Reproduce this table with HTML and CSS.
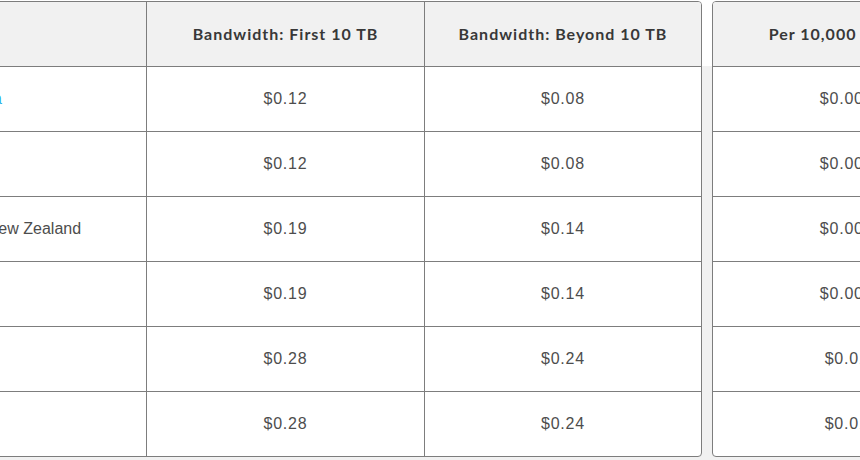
FILE: index.html
```html
<!DOCTYPE html>
<html lang="en">
<head>
<meta charset="utf-8">
<title>CDN pricing</title>
<link rel="stylesheet" href="styles.css">
</head>
<body>
<div class="tables">
  <div class="price-table main">
    <div class="cell head name"></div>
    <div class="cell head">Bandwidth: First 10 TB</div>
    <div class="cell head last">Bandwidth: Beyond 10 TB</div>

    <div class="cell name"><a href="#">Latin America</a></div>
    <div class="cell price">$0.12</div>
    <div class="cell price last">$0.08</div>

    <div class="cell name">Europe</div>
    <div class="cell price">$0.12</div>
    <div class="cell price last">$0.08</div>

    <div class="cell name">Australia &amp; New Zealand</div>
    <div class="cell price">$0.19</div>
    <div class="cell price last">$0.14</div>

    <div class="cell name">Asia Pacific</div>
    <div class="cell price">$0.19</div>
    <div class="cell price last">$0.14</div>

    <div class="cell name">Japan</div>
    <div class="cell price">$0.28</div>
    <div class="cell price last">$0.24</div>

    <div class="cell name bottom">India</div>
    <div class="cell price bottom">$0.28</div>
    <div class="cell price last bottom">$0.24</div>
  </div>

  <div class="price-table side">
    <div class="cell head">Per 10,000 Requests</div>
    <div class="cell price">$0.0075</div>
    <div class="cell price">$0.0090</div>
    <div class="cell price">$0.0090</div>
    <div class="cell price">$0.0090</div>
    <div class="cell price">$0.016</div>
    <div class="cell price bottom">$0.016</div>
  </div>
</div>
</body>
</html>
```

FILE: styles.css
```css
html, body {
  margin: 0;
  padding: 0;
}

body {
  width: 860px;
  height: 460px;
  overflow: hidden;
  background: linear-gradient(#ffffff 0, #ffffff 66px, #f1f1f1 66px);
  font-family: "Liberation Sans", Arial, sans-serif;
}

.tables {
  display: flex;
  gap: 10px;
  padding-top: 1px;
  margin-left: -117px;
  width: 1200px;
}

.price-table {
  display: grid;
  border: 1px solid #7d7d7d;
  border-radius: 4px;
  overflow: hidden;
  background: #ffffff;
  flex: none;
}

.main {
  grid-template-columns: 263px 278px 276px;
}

.side {
  grid-template-columns: 278px;
}

.cell {
  box-sizing: border-box;
  height: 65px;
  border-right: 1px solid #7d7d7d;
  border-bottom: 1px solid #7d7d7d;
  display: flex;
  align-items: center;
  justify-content: center;
  font-size: 16px;
  color: #4d4d4d;
}

.cell.price {
  letter-spacing: 0.8px;
}

.cell.last {
  border-right: none;
}

.cell.bottom {
  border-bottom: none;
  height: 64px;
}

.cell.head {
  background: #f1f1f1;
  font-family: Lato, "Open Sans", sans-serif;
  font-weight: 700;
  font-size: 16px;
  letter-spacing: 1px;
  color: #383838;
  padding-bottom: 2px;
}

.cell.name {
  justify-content: flex-start;
  padding-left: 21px;
}

.cell.name a {
  color: #29aee6;
  text-decoration: none;
}
```
